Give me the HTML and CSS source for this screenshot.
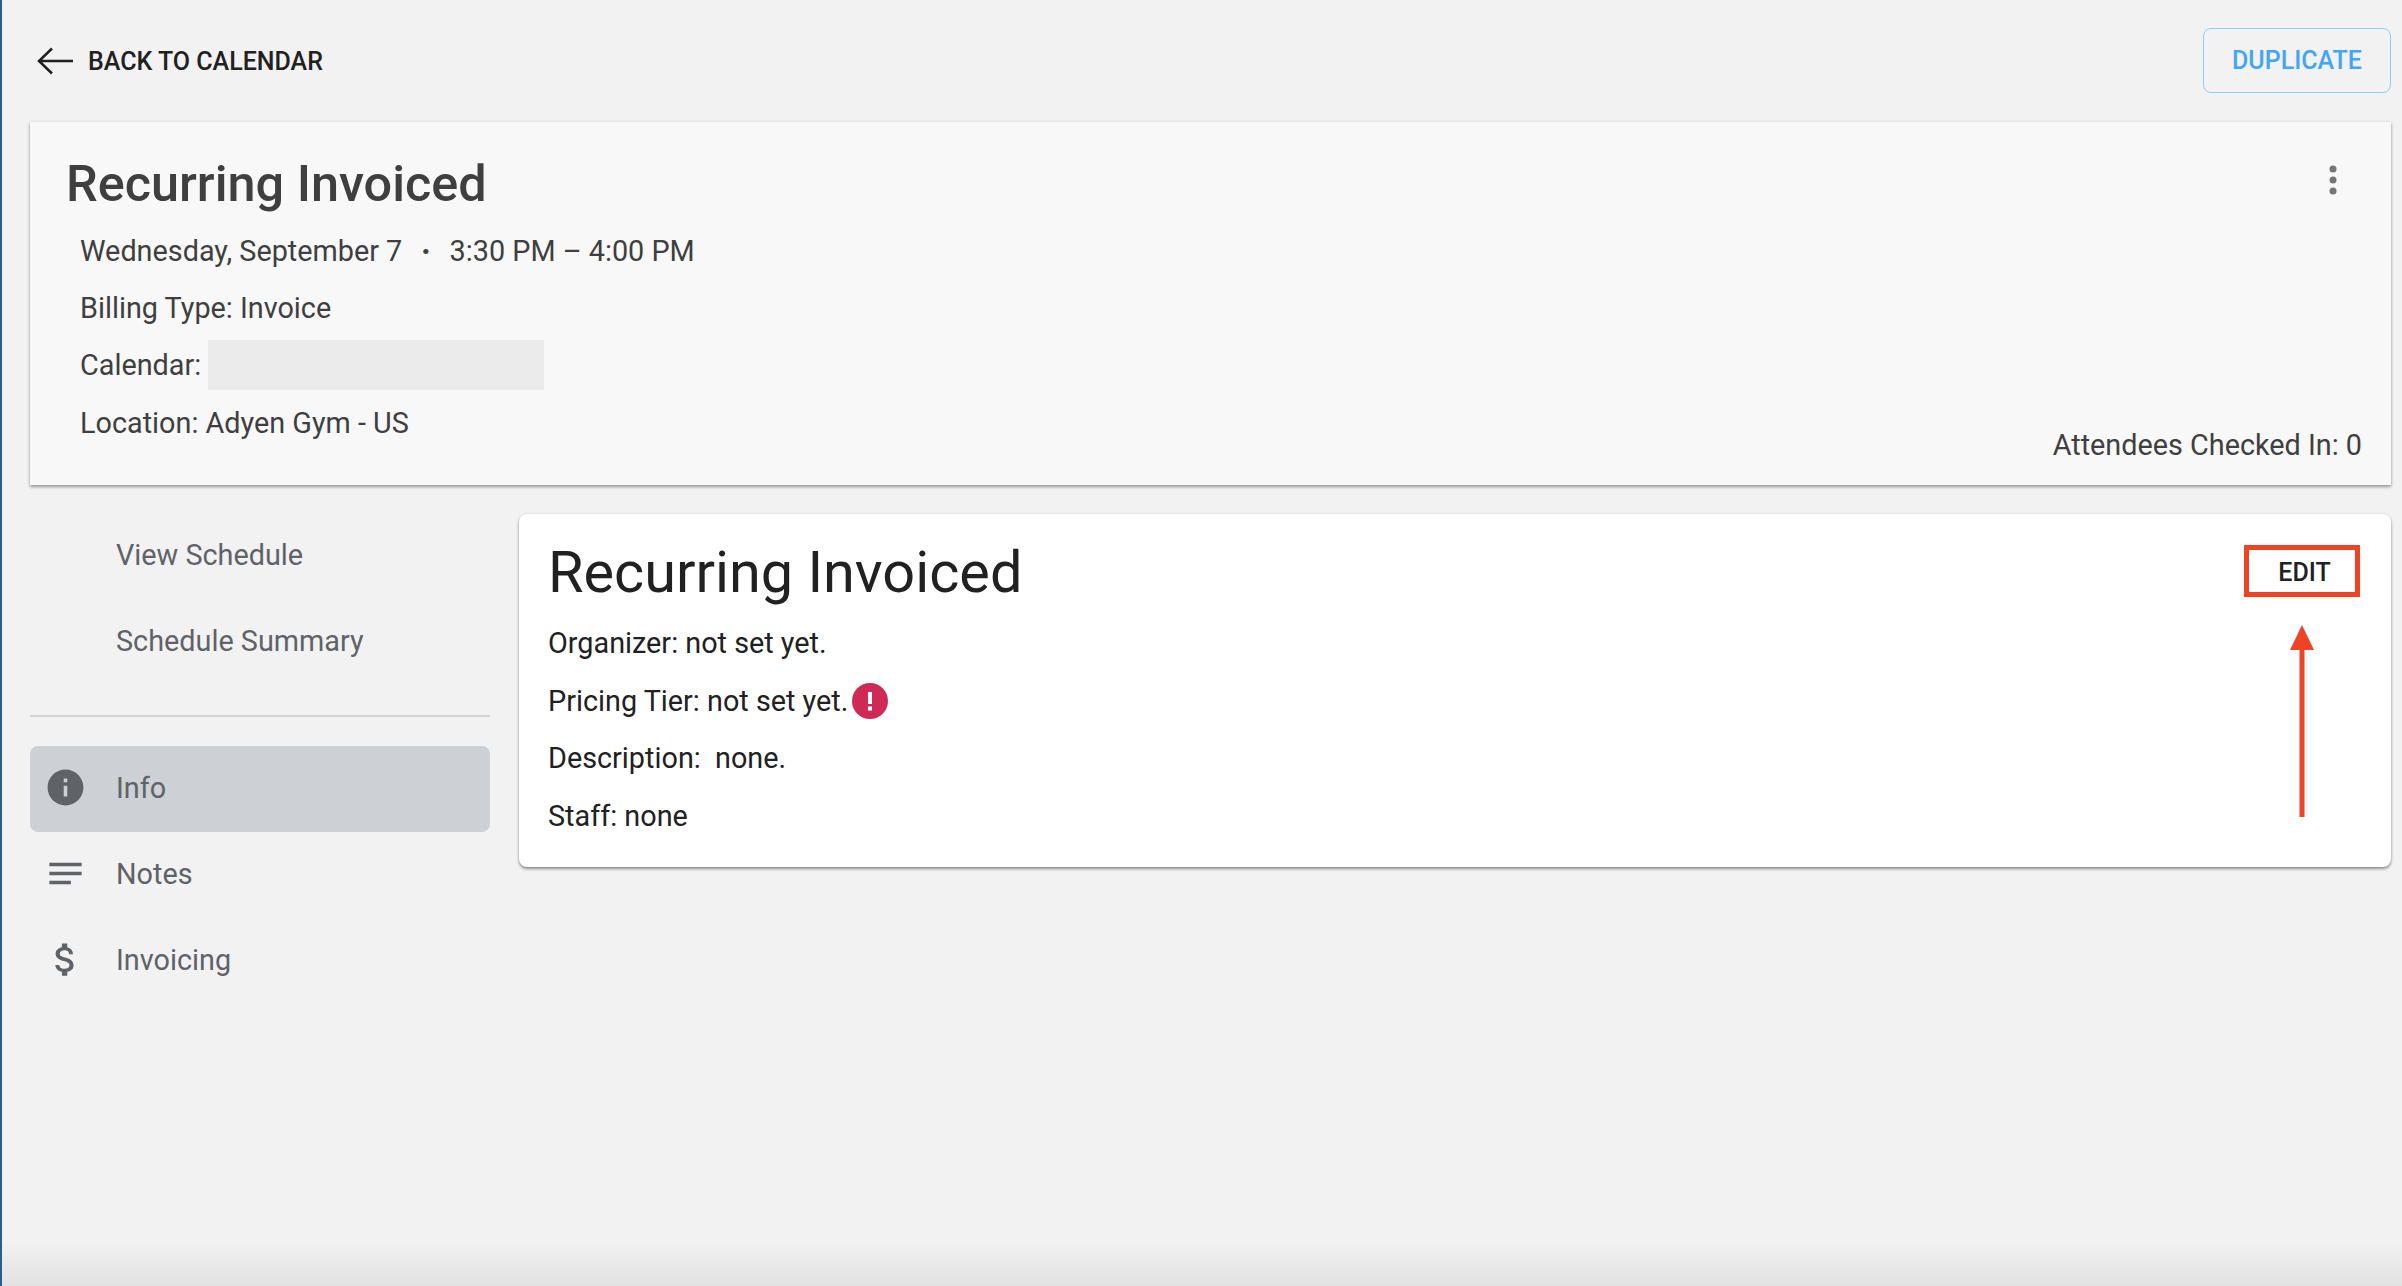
FILE: index.html
```html
<!DOCTYPE html>
<html lang="en">
<head>
<meta charset="utf-8">
<title>Recurring Invoiced</title>
<link rel="stylesheet" href="styles.css">
</head>
<body>
<div class="page">
  <header class="topbar">
    <a class="back">
      <svg class="back-icon" viewBox="0 0 36 28" width="36" height="28"><path d="M36 14H2M15 1.500 2 14 15 26.500" fill="none" stroke="#1f1f1f" stroke-width="2.500"/></svg>
      <span>BACK TO CALENDAR</span>
    </a>
    <button class="duplicate">DUPLICATE</button>
  </header>

  <section class="summary">
    <div class="summary-left">
      <h1 class="summary-title">Recurring Invoiced</h1>
      <div class="summary-row">Wednesday, September 7<span class="dot">·</span>3:30 PM – 4:00 PM</div>
      <div class="summary-row">Billing Type: Invoice</div>
      <div class="summary-row">Calendar:<span class="redacted"></span></div>
      <div class="summary-row">Location: Adyen Gym - US</div>
    </div>
    <div class="summary-right">
      <svg class="kebab" viewBox="0 0 8 30" width="8" height="30"><circle cx="4" cy="4" r="3.5"/><circle cx="4" cy="15" r="3.5"/><circle cx="4" cy="26" r="3.5"/></svg>
      <div class="attendees">Attendees Checked In: 0</div>
    </div>
  </section>

  <div class="content">
    <nav class="sidebar">
      <div class="nav-item"><span class="nav-icon"></span>View Schedule</div>
      <div class="nav-item"><span class="nav-icon"></span>Schedule Summary</div>
      <div class="divider"></div>
      <div class="nav-item with-icon active">
        <span class="nav-icon"><svg viewBox="0 0 24 24" width="43" height="43"><path d="M12 2C6.48 2 2 6.48 2 12s4.48 10 10 10 10-4.48 10-10S17.52 2 12 2zm1 15h-2v-6h2v6zm0-8h-2V7h2v2z"/></svg></span>Info
      </div>
      <div class="nav-item with-icon">
        <span class="nav-icon"><svg viewBox="0 0 24 24" width="43" height="43"><path d="M3 18h12v-2H3v2zM3 6v2h18V6H3zm0 7h18v-2H3v2z"/></svg></span>Notes
      </div>
      <div class="nav-item with-icon">
        <span class="nav-icon"><svg viewBox="0 0 24 24" width="43" height="43"><path d="M11.8 10.9c-2.27-.59-3-1.2-3-2.15 0-1.09 1.01-1.85 2.7-1.85 1.78 0 2.44.85 2.5 2.1h2.21c-.07-1.72-1.12-3.3-3.21-3.81V3h-3v2.16c-1.94.42-3.5 1.68-3.5 3.61 0 2.31 1.91 3.46 4.7 4.13 2.5.6 3 1.48 3 2.41 0 .69-.49 1.79-2.7 1.79-2.06 0-2.87-.92-2.98-2.1h-2.2c.12 2.19 1.76 3.42 3.68 3.83V21h3v-2.15c1.95-.37 3.5-1.5 3.5-3.55 0-2.84-2.43-3.81-4.7-4.4z"/></svg></span>Invoicing
      </div>
    </nav>

    <main class="detail">
      <div class="detail-head">
        <h2 class="detail-title">Recurring Invoiced</h2>
        <button class="edit">EDIT</button>
      </div>
      <div class="detail-row">Organizer: not set yet.</div>
      <div class="detail-row">Pricing Tier: not set yet.<svg class="alert" viewBox="0 0 36 36" width="36" height="36"><circle cx="18" cy="18" r="18" fill="#cf2a56"/><rect x="16" y="9" width="4" height="12" fill="#fff"/><rect x="16" y="23.500" width="4" height="4" fill="#fff"/></svg></div>
      <div class="detail-row">Description:&nbsp; none.</div>
      <div class="detail-row">Staff: none</div>
      <svg class="pointer" viewBox="0 0 24 192" width="24" height="192"><path d="M12 0 24 25H14.500V192H9.500V25H0Z" fill="#ee4325"/></svg>
    </main>
  </div>
</div>
</body>
</html>
```
FILE: styles.css
```css
* { box-sizing: border-box; }
html, body { margin: 0; height: 100%; overflow: hidden; }
body { font-family: Roboto, "Liberation Sans", sans-serif; background: #f2f2f2; color: #212121; }

.page {
  position: relative;
  height: 1286px;
  padding: 0 11px 0 28px;
  border-left: 2px solid #2c5f85;
}
.page::after {
  content: "";
  position: absolute;
  left: 0; right: -11px; bottom: 0;
  height: 46px;
  background: linear-gradient(to bottom, rgba(226,226,226,0), #e2e2e2);
  pointer-events: none;
}

.topbar { height: 122px; display: flex; align-items: center; justify-content: space-between; }
.back { display: flex; align-items: center; gap: 15px; padding-left: 7px; font-size: 25px; font-weight: 500; color: #212121; }
.duplicate {
  width: 188px; height: 65px; margin-top: -1px;
  border: 1.500px solid #90caf9; border-radius: 8px; background: transparent;
  font: 500 25px Roboto, sans-serif; color: #42a5f5; padding: 0;
}

.summary {
  height: 363px; display: flex; justify-content: space-between;
  background: #f8f8f8; color: #3f3f3f;
  padding: 31px 29px 23px 36px;
  box-shadow: 0 2px 3px rgba(0,0,0,.35), 0 0 3px rgba(0,0,0,.1);
}
.summary-title { margin: 0 0 7px; font-size: 50.400px; line-height: 62px; font-weight: 500; }
.summary-row { height: 57.400px; display: flex; align-items: center; padding-left: 14px; font-size: 28.800px; }
.dot { margin: 0 19px; font-weight: 900; }
.redacted { width: 336px; height: 50px; margin-left: 7px; background: #ebebeb; }
.summary-right { display: flex; flex-direction: column; justify-content: space-between; align-items: flex-end; }
.kebab { margin: 12px 25px 0 0; fill: #757575; }
.attendees { font-size: 28.800px; line-height: 34px; }

.content { display: flex; gap: 29px; margin-top: 27px; }
.sidebar { width: 460px; flex: none; color: #5f6368; font-size: 28.800px; }
.nav-item { height: 86px; display: flex; align-items: center; border-radius: 8px; }
.nav-item.with-icon { padding-bottom: 3px; }
.nav-item.active { background: #cdd0d5; }
.nav-icon { width: 86px; flex: none; display: flex; justify-content: center; padding-right: 15px; }
.nav-icon svg { fill: #5f6368; display: block; }
.divider { height: 2px; background: #d5d5d5; margin: 31px 0 29px; }

.detail {
  position: relative; flex: 1; height: 353px; margin-top: 2px;
  background: #fff; border-radius: 8px;
  padding: 27px 31px 0 29px;
  box-shadow: 0 2px 3px rgba(0,0,0,.4), 0 0 3px rgba(0,0,0,.1);
}
.detail-head { display: flex; justify-content: space-between; align-items: center; height: 60px; margin-bottom: 13.500px; }
.detail-title { margin: 3px 0 0; font-size: 57.600px; font-weight: 400; line-height: 60px; }
.edit {
  width: 116px; height: 52px; padding: 2px 0 0 5px;
  border: 5px solid #ee4325; background: #fff;
  font: 500 25px Roboto, sans-serif; color: #212121;
}
.detail-row { height: 57.600px; display: flex; align-items: center; font-size: 28.800px; }
.alert { margin-left: 4px; }
.pointer { position: absolute; right: 77px; top: 111px; }
```
